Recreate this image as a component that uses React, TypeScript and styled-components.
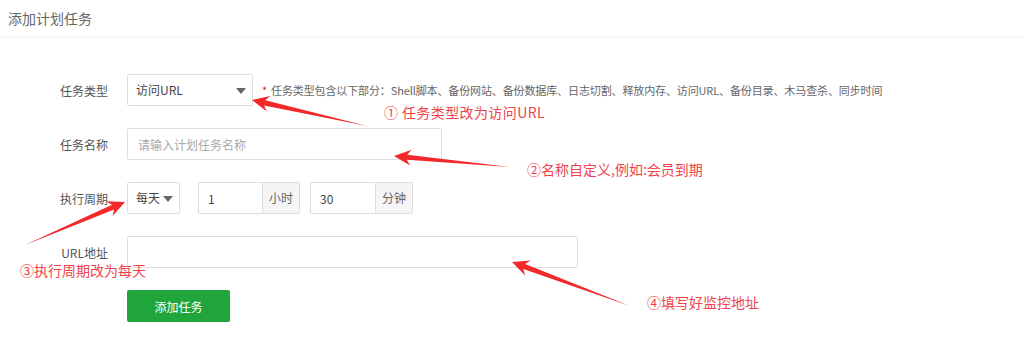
import styled, { createGlobalStyle } from 'styled-components';

const GlobalStyle = createGlobalStyle`
  html, body {
    margin: 0;
    padding: 0;
    background: #fff;
  }
  body {
    font-family: "Noto Sans CJK SC", "Liberation Sans", sans-serif;
    color: #555;
    font-size: 12px;
  }
`;

const ANNOTATION_RED = '#f0434a';

// arrows: tail -> head, coordinates on the page canvas
const arrows = [
  { x1: 367, y1: 126, x2: 252, y2: 100 },
  { x1: 510, y1: 167, x2: 394, y2: 156 },
  { x1: 25, y1: 245, x2: 125, y2: 202 },
  { x1: 630, y1: 306, x2: 512, y2: 262 },
];

const arrowPoints = (a: { x1: number; y1: number; x2: number; y2: number }) => {
  const dx = a.x2 - a.x1;
  const dy = a.y2 - a.y1;
  const len = Math.sqrt(dx * dx + dy * dy);
  const ux = dx / len;
  const uy = dy / len;
  const nx = -uy;
  const ny = ux;
  const headLen = 17;
  const headW = 8;
  const neckW = 2.6;
  const bx = a.x2 - ux * headLen;
  const by = a.y2 - uy * headLen;
  const ix = a.x2 - ux * (headLen - 4);
  const iy = a.y2 - uy * (headLen - 4);
  const pts = [
    [a.x1, a.y1],
    [ix + nx * neckW, iy + ny * neckW],
    [bx + nx * headW, by + ny * headW],
    [a.x2, a.y2],
    [bx - nx * headW, by - ny * headW],
    [ix - nx * neckW, iy - ny * neckW],
  ];
  return pts.map((p) => p.join(',')).join(' ');
};

const App = () => {
  return (
    <Page>
      <GlobalStyle />
      <Header>添加计划任务</Header>
      <Form>
        <Row>
          <Label>任务类型</Label>
          <Select $width={126}>
            访问URL
            <Caret />
          </Select>
          <Hint>
            <Star>*</Star>
            任务类型包含以下部分：Shell脚本、备份网站、备份数据库、日志切割、释放内存、访问URL、备份目录、木马查杀、同步时间
          </Hint>
        </Row>
        <Row>
          <Label>任务名称</Label>
          <TextInput $width={315} placeholder="请输入计划任务名称" />
        </Row>
        <Row>
          <Label>执行周期</Label>
          <Select $width={53}>
            每天
            <Caret />
          </Select>
          <InputGroup $gap={18}>
            <GroupInput $width={64} defaultValue="1" />
            <Addon>小时</Addon>
          </InputGroup>
          <InputGroup $gap={10}>
            <GroupInput $width={65} defaultValue="30" />
            <Addon>分钟</Addon>
          </InputGroup>
        </Row>
        <Row>
          <Label>URL地址</Label>
          <TextInput $width={451} />
        </Row>
        <Row>
          <Label />
          <SubmitButton>添加任务</SubmitButton>
        </Row>
      </Form>

      <Overlay width="1024" height="358" viewBox="0 0 1024 358">
        {arrows.map((a, i) => (
          <polygon key={i} points={arrowPoints(a)} fill="#f2282b" />
        ))}
      </Overlay>
      <Note $x={384} $y={102} $spacing={0.4}>① 任务类型改为访问URL</Note>
      <Note $x={527} $y={159}>②名称自定义,例如:会员到期</Note>
      <Note $x={20} $y={260}>③执行周期改为每天</Note>
      <Note $x={647} $y={292}>④填写好监控地址</Note>
    </Page>
  );
};
export default App;

const Page = styled.div`
  position: relative;
  width: 1024px;
  height: 358px;
  overflow: hidden;
  background: #fff;
`;

const Header = styled.div`
  height: 36px;
  line-height: 36px;
  padding-left: 8px;
  font-size: 14px;
  color: #666;
  border-bottom: 1px solid #f2f2f2;
  box-shadow: 0 1px 2px rgba(0, 0, 0, 0.03);
`;

const Form = styled.div`
  padding-top: 37px;
  display: flex;
  flex-direction: column;
  gap: 22px;
`;

const Row = styled.div`
  display: flex;
  align-items: center;
  height: 32px;
`;

const Label = styled.div`
  width: 108px;
  margin-right: 19px;
  text-align: right;
  font-size: 12px;
  color: #555;
  flex-shrink: 0;
`;

const Select = styled.div<{ $width: number }>`
  position: relative;
  box-sizing: border-box;
  width: ${(p) => p.$width}px;
  height: 32px;
  line-height: 30px;
  padding-left: 8px;
  border: 1px solid #ddd;
  border-radius: 2px;
  font-size: 12px;
  color: #444;
`;

const Caret = styled.span`
  position: absolute;
  right: 6px;
  top: 13px;
  width: 0;
  height: 0;
  border-left: 5px solid transparent;
  border-right: 5px solid transparent;
  border-top: 6px solid #666;
`;

const Hint = styled.div`
  margin-left: 9px;
  font-size: 11px;
  letter-spacing: -0.12px;
  color: #666;
  white-space: nowrap;
`;

const Star = styled.span`
  color: #ef0808;
  margin-right: 4px;
`;

const TextInput = styled.input<{ $width: number }>`
  box-sizing: border-box;
  width: ${(p) => p.$width}px;
  height: 32px;
  padding: 0 10px;
  border: 1px solid #ddd;
  border-radius: 2px;
  outline: none;
  font-family: inherit;
  font-size: 12px;
  color: #444;
  &::placeholder {
    color: #aaa;
  }
`;

const InputGroup = styled.div<{ $gap: number }>`
  display: flex;
  margin-left: ${(p) => p.$gap}px;
  height: 32px;
`;

const GroupInput = styled.input<{ $width: number }>`
  box-sizing: border-box;
  width: ${(p) => p.$width}px;
  height: 32px;
  padding: 0 9px;
  border: 1px solid #ddd;
  border-right: none;
  border-radius: 2px 0 0 2px;
  outline: none;
  font-family: inherit;
  font-size: 12px;
  color: #444;
`;

const Addon = styled.div`
  box-sizing: border-box;
  width: 38px;
  height: 32px;
  line-height: 30px;
  text-align: center;
  background: #f5f5f5;
  border: 1px solid #ddd;
  border-radius: 0 2px 2px 0;
  font-size: 12px;
  color: #666;
`;

const SubmitButton = styled.button`
  width: 103px;
  height: 32px;
  border: none;
  border-radius: 2px;
  background: #20a53a;
  color: #fff;
  font-family: inherit;
  font-size: 12px;
  cursor: pointer;
`;

const Overlay = styled.svg`
  position: absolute;
  left: 0;
  top: 0;
  pointer-events: none;
`;

const Note = styled.div<{ $x: number; $y: number; $spacing?: number }>`
  position: absolute;
  left: ${(p) => p.$x}px;
  top: ${(p) => p.$y}px;
  font-size: 14px;
  line-height: 20px;
  letter-spacing: ${(p) => p.$spacing ?? 0}px;
  color: ${ANNOTATION_RED};
  white-space: nowrap;
`;
